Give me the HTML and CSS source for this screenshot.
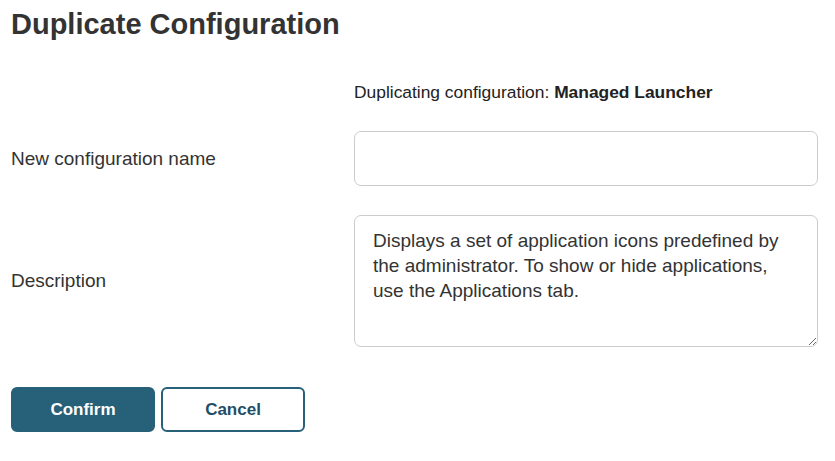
FILE: index.html
```html
<!DOCTYPE html>
<html lang="en">
<head>
  <meta charset="UTF-8">
  <meta name="viewport" content="width=device-width, initial-scale=1.0">
  <title>Duplicate Configuration</title>
  <link rel="stylesheet" href="styles.css">
</head>
<body>

  <div class="page">
    <h1>Duplicate Configuration</h1>

    <!-- Configuration source -->
    <div class="form-row info-row">
      <span></span>
      <p class="info">Duplicating configuration: <strong>Managed Launcher</strong></p>
    </div>

    <!-- Name -->
    <div class="form-row">
      <label for="configName">New configuration name</label>
      <input type="text" id="configName" class="field">
    </div>

    <!-- Description -->
    <div class="form-row">
      <label for="configDesc">Description</label>
      <textarea id="configDesc" class="field area">Displays a set of application icons predefined by the administrator. To show or hide applications, use the Applications tab.</textarea>
    </div>

    <!-- Actions -->
    <div class="actions">
      <button class="btn btn-primary">Confirm</button>
      <button class="btn btn-secondary">Cancel</button>
    </div>
  </div>

</body>
</html>
```

FILE: styles.css
```css
body {
  margin: 0;
  padding: 0;
  background-color: #fff;
  font-family: "Liberation Sans", Arial, sans-serif;
  color: #333;
}
.page {
  padding: 8px 11px;
}
h1 {
  margin: 0;
  font-size: 29px;
  line-height: 32px;
  font-weight: bold;
  color: #333;
}
.form-row {
  display: grid;
  grid-template-columns: 343px 464px;
  align-items: center;
  margin-bottom: 29px;
}
.info-row {
  margin-top: 42px;
  margin-bottom: 29px;
}
.info {
  margin: 0;
  font-size: 17.4px;
  line-height: 20px;
  color: #222;
}
.info strong {
  color: #222;
}
label {
  font-size: 19px;
  color: #333;
}
.field {
  box-sizing: border-box;
  width: 464px;
  height: 55px;
  padding: 12px 18px;
  border: 1px solid #ccc;
  border-radius: 7px;
  font-family: "Liberation Sans", Arial, sans-serif;
  font-size: 19px;
  line-height: 25px;
  color: #333;
  background-color: #fff;
}
.area {
  display: block;
  height: 132px;
  padding-top: 12px;
}
.actions {
  display: flex;
  gap: 6px;
  margin-top: 40px;
}
.btn {
  box-sizing: border-box;
  width: 144px;
  height: 45px;
  border-radius: 6px;
  font-family: "Liberation Sans", Arial, sans-serif;
  font-size: 17px;
  font-weight: bold;
  cursor: pointer;
}
.btn-primary {
  background-color: #276079;
  border: 2px solid #276079;
  color: #fff;
}
.btn-secondary {
  background-color: #fff;
  border: 2px solid #276079;
  color: #1f4f66;
}
```
